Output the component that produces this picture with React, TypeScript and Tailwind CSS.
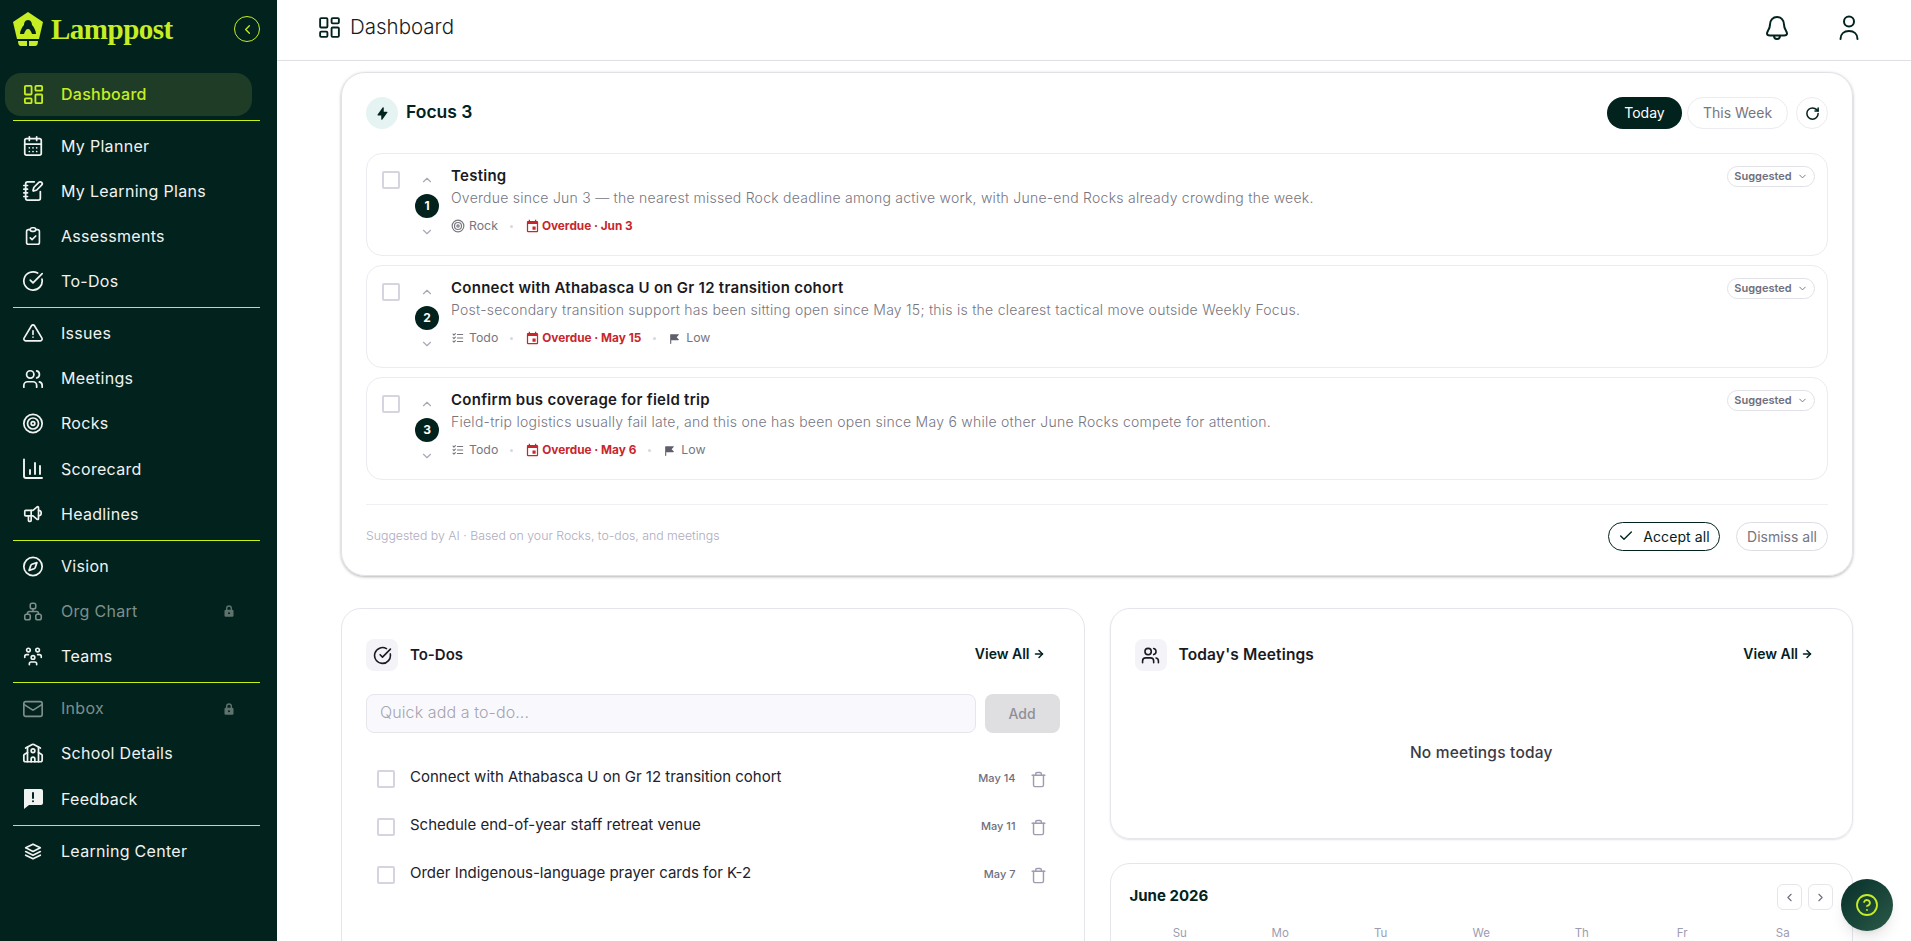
import React from 'react';
import { CalendarDays, NotebookPen, CircleCheckBig, Users, Target, Compass, Mail, School, ChevronLeft, ChevronRight, ChevronUp, ChevronDown, Check, RotateCw, Trash, ArrowRight, CircleHelp, LayoutDashboard } from 'lucide-react';
import { TbClipboardCheck, TbAlertTriangle, TbSpeakerphone, TbSitemap, TbUsersGroup, TbStack2, TbListCheck, TbBoltFilled, TbFlag3Filled } from 'react-icons/tb';
import { MdEvent } from 'react-icons/md';

const Scorecard = ({ size = 22 }: { size?: number }) => (
  <svg width={size} height={size} viewBox="0 0 22 22" fill="none" stroke="currentColor" strokeWidth="1.9" strokeLinecap="round" strokeLinejoin="round">
    <path d="M2 1.5V18a2 2 0 0 0 2 2h16" />
    <path d="M8 16v-4M13 16V5M18 16V8" />
  </svg>
);

const Feedback = ({ size = 22 }: { size?: number }) => (
  <svg width={size} height={size} viewBox="0 0 22 22">
    <path fill="currentColor" d="M3 1h16a2 2 0 0 1 2 2v12a2 2 0 0 1-2 2H7l-5 4V2a1 1 0 0 1 1-1Z" />
    <path stroke="#02221e" strokeWidth="2" strokeLinecap="round" d="M11 5v5M11 13.2v.1" />
  </svg>
);

const SmallLock = () => (
  <svg width="10" height="12" viewBox="0 0 10 12" className="text-[#5f736d]">
    <path fill="none" stroke="currentColor" strokeWidth="1.4" d="M2.700 5V3.300a2.300 2.300 0 0 1 4.600 0V5" />
    <rect fill="currentColor" x="0.500" y="4.700" width="9" height="7" rx="1.200" />
    <circle fill="#02221e" cx="5" cy="8.200" r="1" />
  </svg>
);

const Logo = () => (
  <svg width="30" height="34" viewBox="0 0 30 34" fill="none">
    <path fill="#c6ee22" d="M15 0 30 10l-4 17H4L0 10Z" />
    <path fill="#02221e" d="M15 8c3 0 4 3 4 5 2 2 4 6 4 9h-4c-1-3-2-5-4-5s-3 2-4 5H7c0-3 2-7 4-9 0-2 1-5 4-5Z" />
    <path fill="#c6ee22" d="M5 29h9v5H8c-2 0-3-2-3-5ZM16 29h9c0 3-1 5-3 5h-6Z" />
  </svg>
);

type NavItem = { label: string; icon: React.ReactNode; locked?: boolean };

const groups: NavItem[][] = [
  [
    { label: 'My Planner', icon: <CalendarDays size={22} strokeWidth={1.9} /> },
    { label: 'My Learning Plans', icon: <NotebookPen size={22} strokeWidth={1.9} /> },
    { label: 'Assessments', icon: <TbClipboardCheck size={24} strokeWidth={1.8} /> },
    { label: 'To-Dos', icon: <CircleCheckBig size={22} strokeWidth={1.9} /> },
  ],
  [
    { label: 'Issues', icon: <TbAlertTriangle size={25} strokeWidth={1.8} /> },
    { label: 'Meetings', icon: <Users size={22} strokeWidth={1.9} /> },
    { label: 'Rocks', icon: <Target size={23} strokeWidth={1.9} /> },
    { label: 'Scorecard', icon: <Scorecard /> },
    { label: 'Headlines', icon: <TbSpeakerphone size={24} strokeWidth={1.8} /> },
  ],
  [
    { label: 'Vision', icon: <Compass size={23} strokeWidth={1.9} /> },
    { label: 'Org Chart', icon: <TbSitemap size={25} strokeWidth={1.7} />, locked: true },
    { label: 'Teams', icon: <TbUsersGroup size={25} strokeWidth={1.8} /> },
  ],
  [
    { label: 'Inbox', icon: <Mail size={24} strokeWidth={1.8} />, locked: true },
    { label: 'School Details', icon: <School size={23} strokeWidth={1.9} /> },
    { label: 'Feedback', icon: <Feedback /> },
  ],
  [{ label: 'Learning Center', icon: <TbStack2 size={25} strokeWidth={1.8} /> }],
];

const Divider = () => <div className="mx-[13px] my-[3px] h-px w-[247px] bg-[#c6f21a]" />;

function Sidebar() {
  return (
    <aside className="h-full w-[277px] shrink-0 bg-[#02221e] text-[#f1f3f0]">
      <div className="flex h-[73px] items-center justify-between pb-[15px] pl-[13px] pr-[17px]">
        <div className="flex items-center gap-[8px]">
          <Logo />
          <span className="font-['Liberation_Serif',serif] text-[29px] font-bold leading-none tracking-[-0.5px] text-[#c6ee22]">Lamppost</span>
        </div>
        <button className="flex h-[26px] w-[26px] items-center justify-center rounded-full border border-[#c6ee22] text-[#c6ee22]">
          <ChevronLeft size={15} />
        </button>
      </div>
      <div className="ml-[5px] flex h-[43px] w-[247px] items-center gap-[16px] rounded-[16px] bg-[#1f3d26] pl-[17px] text-[16px] font-medium tracking-[0.25px] text-[#c6ee22]">
        <LayoutDashboard size={23} strokeWidth={1.9} />
        <span className="pb-[2px]">Dashboard</span>
      </div>
      <div className="mt-[3.500px]" />
      {groups.map((group, i) => (
        <div key={i}>
          <Divider />
          {group.map(item => (
            <div key={item.label} className={`flex h-[45.150px] items-center pl-[22px] pr-[43px] text-[16px] tracking-[0.3px] ${item.locked ? 'text-[#7e8f8a]' : ''}`}>
              <span className="flex w-[22px] justify-center">{item.icon}</span>
              <span className="ml-[17px] flex-1 pb-[1px]">{item.label}</span>
              {item.locked && <SmallLock />}
            </div>
          ))}
        </div>
      ))}
    </aside>
  );
}

const Dot = () => <span className="mx-[12px] h-[3px] w-[3px] rounded-full bg-[#d8d7de]" />;

type Focus = { n: number; title: string; note: string; kind: 'Rock' | 'Todo'; due: string; low?: boolean };

const focusItems: Focus[] = [
  { n: 1, title: 'Testing', note: 'Overdue since Jun 3 — the nearest missed Rock deadline among active work, with June-end Rocks already crowding the week.', kind: 'Rock', due: 'Overdue · Jun 3' },
  { n: 2, title: 'Connect with Athabasca U on Gr 12 transition cohort', note: 'Post-secondary transition support has been sitting open since May 15; this is the clearest tactical move outside Weekly Focus.', kind: 'Todo', due: 'Overdue · May 15', low: true },
  { n: 3, title: 'Confirm bus coverage for field trip', note: 'Field-trip logistics usually fail late, and this one has been open since May 6 while other June Rocks compete for attention.', kind: 'Todo', due: 'Overdue · May 6', low: true },
];

function FocusRow({ item }: { item: Focus }) {
  return (
    <div className="flex h-[103px] rounded-[16px] border border-[#ecebf0] pl-[15px] pr-[12px]">
      <div className="mt-[17px] h-[18px] w-[18px] rounded-[2px] border-2 border-[#d5d4e0]" />
      <div className="ml-[15px] flex w-[24px] flex-col items-center pt-[19px] text-[#a9a8b5]">
        <ChevronUp size={14} />
        <span className="my-[7px] flex h-[24px] w-[24px] items-center justify-center rounded-full bg-[#02221e] text-[12px] font-bold text-white">{item.n}</span>
        <ChevronDown size={14} />
      </div>
      <div className="ml-[12px] min-w-0 flex-1 pt-[12px]">
        <div className="text-[15px] font-semibold leading-[20px] tracking-[0.27px] text-[#1a1a24]">{item.title}</div>
        <div className="mt-[2px] text-[14px] font-light leading-[20px] tracking-[0.25px] text-[#77767f]">{item.note}</div>
        <div className="mt-[8px] flex items-center text-[12.3px] leading-[20px] text-[#77767f]">
          {item.kind === 'Rock' ? <Target size={14} /> : <TbListCheck size={14} />}
          <span className="ml-[4px]">{item.kind}</span>
          <Dot />
          <MdEvent size={15} className="text-[#c9262b]" />
          <span className="ml-[2px] text-[11.800px] font-bold text-[#c9262b]">{item.due}</span>
          {item.low && (
            <>
              <Dot />
              <TbFlag3Filled size={13} className="text-[#5f5e6b]" />
              <span className="ml-[5px]">Low</span>
            </>
          )}
        </div>
      </div>
      <button className="mt-[12px] flex h-[21px] w-[88px] items-center justify-center gap-[5px] rounded-full border border-[#e2e1e8] text-[11px] font-semibold text-[#6f6e7c]">
        Suggested <ChevronDown size={11} />
      </button>
    </div>
  );
}

function FocusCard() {
  return (
    <section className="rounded-[24px] border border-[#e2e1e8] px-[24px] pt-[24px] pb-[24px] shadow-[0_1px_3px_rgba(0,0,0,0.3)]">
      <div className="flex h-[32px] items-center">
        <span className="flex h-[32px] w-[32px] items-center justify-center rounded-full bg-[#e5f4f2] text-[#02221e]">
          <TbBoltFilled size={15} />
        </span>
        <span className="ml-[8px] flex-1 pb-[2px] text-[17.5px] font-semibold text-[#02221e]">Focus 3</span>
        <button className="h-[32px] w-[75px] rounded-full bg-[#02221e] pb-[2px] text-[14px] text-white">Today</button>
        <button className="ml-[5px] h-[32px] w-[101px] rounded-full border border-[#ecebf0] pb-[2px] text-[14px] text-[#77767f]">This Week</button>
        <button className="ml-[8px] flex h-[32px] w-[32px] items-center justify-center rounded-full border border-[#ecebf0] text-[#02221e]">
          <RotateCw size={15} strokeWidth={2.4} />
        </button>
      </div>
      <div className="mt-[24px] flex flex-col gap-[9px]">
        {focusItems.map(item => <FocusRow key={item.n} item={item} />)}
      </div>
      <div className="mt-[24px] h-px bg-[#f0eff3]" />
      <div className="mt-[17px] flex h-[29px] items-center">
        <span className="flex-1 text-[12.3px] font-light text-[#aeacc0]">Suggested by AI · Based on your Rocks, to-dos, and meetings</span>
        <button className="flex h-[29px] w-[112px] items-center justify-center gap-[9px] rounded-full border border-[#02221e] pb-[1px] text-[14px] tracking-[0.1px] text-[#02221e]">
          <Check size={16} /> Accept all
        </button>
        <button className="ml-[16px] h-[29px] w-[92px] rounded-full border border-[#dddce4] pb-[1px] text-[14px] text-[#77767f]">Dismiss all</button>
      </div>
    </section>
  );
}

const ViewAll = () => (
  <span className="flex items-center gap-[3px] pb-[3px] text-[14px] font-semibold text-[#02221e]">
    View All <ArrowRight size={12} strokeWidth={3} />
  </span>
);

const todos = [
  { title: 'Connect with Athabasca U on Gr 12 transition cohort', date: 'May 14' },
  { title: 'Schedule end-of-year staff retreat venue', date: 'May 11' },
  { title: 'Order Indigenous-language prayer cards for K-2', date: 'May 7' },
];

function TodoCard() {
  return (
    <section className="rounded-[20px] border border-[#e6e5ec] px-[24px] pt-[30px] pb-[60px]">
      <div className="flex h-[32px] items-center pr-[15px]">
        <span className="flex h-[32px] w-[32px] items-center justify-center rounded-[8px] bg-[#f3f3f8] text-[#1a1a24]">
          <CircleCheckBig size={19} />
        </span>
        <span className="ml-[12px] flex-1 text-[15px] font-semibold text-[#1a1a24]">To-Dos</span>
        <ViewAll />
      </div>
      <div className="mt-[23px] flex gap-[9px]">
        <input placeholder="Quick add a to-do..." className="h-[39px] flex-1 rounded-[8px] border border-[#e6e5ec] bg-[#f9f9fd] px-[13px] pb-[3px] text-[16px] font-light tracking-[0.1px] outline-none placeholder:text-[#a5a4b0]" />
        <button className="h-[39px] w-[75px] rounded-[8px] bg-[#dfdfe1] text-[14px] font-medium text-[#8f8f96]">Add</button>
      </div>
      <div className="mt-[22px] flex flex-col">
        {todos.map(t => (
          <div key={t.title} className="flex h-[48px] items-center pl-[11px] pr-[13px]">
            <span className="h-[18px] w-[18px] rounded-[2px] border-2 border-[#d5d4e0]" />
            <span className="ml-[15px] flex-1 pb-[3px] text-[15px] text-[#22222c]">{t.title}</span>
            <span className="pb-[2px] text-[11px] font-medium text-[#6f6e7c]">{t.date}</span>
            <Trash size={17} className="ml-[14px] text-[#9d9cb0]" />
          </div>
        ))}
      </div>
    </section>
  );
}

function MeetingsCard() {
  return (
    <section className="flex h-[231px] flex-col rounded-[20px] border border-[#e6e5ec] px-[24px] pt-[30px] shadow-[0_1px_2px_rgba(0,0,0,0.12)]">
      <div className="flex h-[32px] items-center pr-[15px]">
        <span className="flex h-[32px] w-[32px] items-center justify-center rounded-[8px] bg-[#f3f3f8] text-[#1a1a24]">
          <Users size={19} />
        </span>
        <span className="ml-[12px] flex-1 text-[15.500px] font-semibold tracking-[0.15px] text-[#1a1a24]">Today's Meetings</span>
        <ViewAll />
      </div>
      <div className="mt-[70px] text-center text-[15.500px] font-medium tracking-[0.2px] text-[#3a3a46]">No meetings today</div>
    </section>
  );
}

const weekdays = ['Su', 'Mo', 'Tu', 'We', 'Th', 'Fr', 'Sa'];

function CalendarCard() {
  return (
    <section className="rounded-[20px] border border-[#e6e5ec] px-[19px] pt-[20px] pb-[20px]">
      <div className="flex h-[26px] items-center">
        <span className="flex-1 pb-[2px] text-[15px] font-bold text-[#02221e]">June 2026</span>
        <button className="flex h-[26px] w-[25px] items-center justify-center rounded-[6px] border border-[#e6e5ec] text-[#6f6e7c]"><ChevronLeft size={13} /></button>
        <button className="ml-[6px] flex h-[26px] w-[25px] items-center justify-center rounded-[6px] border border-[#e6e5ec] text-[#6f6e7c]"><ChevronRight size={13} /></button>
      </div>
      <div className="mt-[15px] grid grid-cols-7 text-center text-[11.500px] text-[#9d9cb0]">
        {weekdays.map(d => <span key={d} className="h-[20px]">{d}</span>)}
      </div>
    </section>
  );
}

export default function App() {
  return (
    <div className="relative flex h-screen overflow-hidden bg-white font-['Inter',sans-serif]">
      <Sidebar />
      <main className="flex min-w-0 flex-1 flex-col">
        <header className="flex h-[61px] shrink-0 items-center border-b border-[#dfdfe3] pb-[5px] pl-[40px] pr-[52px] text-[#02221e]">
          <LayoutDashboard size={25} strokeWidth={1.8} />
          <span className="ml-[8px] flex-1 text-[20.500px] font-light text-[#1a1a24]">Dashboard</span>
          <svg className="-mr-[1px]" width="24" height="26" viewBox="0 0 24 26" fill="none" stroke="currentColor" strokeWidth="2" strokeLinejoin="round">
            <path d="M12 2c4 0 7 3.200 7 7.500 0 5 3 6.500 3 9 0 1.500-1 2-3 2H5c-2 0-3-.5-3-2 0-2.500 3-4 3-9C5 5.200 8 2 12 2Z" />
            <path d="M9 20.500c0 2 1.300 3.500 3 3.500s3-1.500 3-3.500" />
          </svg>
          <svg className="ml-[51px]" width="20" height="26" viewBox="0 0 20 26" fill="none" stroke="currentColor" strokeWidth="2" strokeLinecap="round">
            <circle cx="10" cy="6.500" r="5" />
            <path d="M1.500 24c0-5 3.500-8 8.500-8s8.500 3 8.500 8" />
          </svg>
        </header>
        <div className="min-h-0 flex-1 pt-[11px] pl-[64px] pr-[58px]">
          <FocusCard />
          <div className="mt-[32px] grid grid-cols-2 gap-[25px]">
            <TodoCard />
            <div className="flex flex-col gap-[24px]">
              <MeetingsCard />
              <CalendarCard />
            </div>
          </div>
        </div>
      </main>
      <button className="absolute left-[1841px] top-[879px] flex h-[52px] w-[52px] items-center justify-center rounded-full bg-gradient-to-br from-[#07302a] to-[#2a5a48] text-[#c6ee22] shadow-lg">
        <CircleHelp size={24} strokeWidth={1.8} />
      </button>
    </div>
  );
}
